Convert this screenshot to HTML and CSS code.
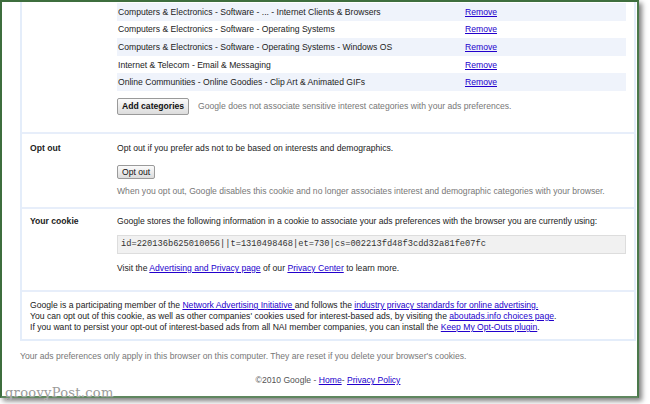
FILE: index.html
```html
<!DOCTYPE html>
<html>
<head>
<meta charset="utf-8">
<link rel="stylesheet" href="styles.css">
</head>
<body>
<div class="frame">
  <div class="box">
    <section class="sec sec-interests">
      <div class="label"></div>
      <div class="content">
        <div class="cats">
          <div class="cat odd"><span class="cat-name">Computers &amp; Electronics - Software - ... - Internet Clients &amp; Browsers</span><a href="#">Remove</a></div>
          <div class="cat"><span class="cat-name">Computers &amp; Electronics - Software - Operating Systems</span><a href="#">Remove</a></div>
          <div class="cat odd"><span class="cat-name">Computers &amp; Electronics - Software - Operating Systems - Windows OS</span><a href="#">Remove</a></div>
          <div class="cat"><span class="cat-name">Internet &amp; Telecom - Email &amp; Messaging</span><a href="#">Remove</a></div>
          <div class="cat odd"><span class="cat-name">Online Communities - Online Goodies - Clip Art &amp; Animated GIFs</span><a href="#">Remove</a></div>
        </div>
        <div class="add-row">
          <button class="btn btn-bold">Add categories</button>
          <span class="note">Google does not associate sensitive interest categories with your ads preferences.</span>
        </div>
      </div>
    </section>
    <section class="sec sec-optout">
      <div class="label">Opt out</div>
      <div class="content">
        <p class="line">Opt out if you prefer ads not to be based on interests and demographics.</p>
        <button class="btn btn-optout">Opt out</button>
        <p class="line note note-optout">When you opt out, Google disables this cookie and no longer associates interest and demographic categories with your browser.</p>
      </div>
    </section>
    <section class="sec sec-cookie">
      <div class="label">Your cookie</div>
      <div class="content">
        <p class="line">Google stores the following information in a cookie to associate your ads preferences with the browser you are currently using:</p>
        <div class="code">id=220136b625010056||t=1310498468|et=730|cs=002213fd48f3cdd32a81fe07fc</div>
        <p class="line visit">Visit the <a href="#">Advertising and Privacy page</a> of our <a href="#">Privacy Center</a> to learn more.</p>
      </div>
    </section>
    <section class="nai">
      <p class="line">Google is a participating member of the <a href="#">Network Advertising Initiative </a> and follows the <a href="#">industry privacy standards for online advertising.</a></p>
      <p class="line">You can opt out of this cookie, as well as other companies' cookies used for interest-based ads, by visiting the <a href="#">aboutads.info choices page</a>.</p>
      <p class="line">If you want to persist your opt-out of interest-based ads from all NAI member companies, you can install the <a href="#">Keep My Opt-Outs plugin</a>.</p>
    </section>
  </div>
  <p class="line note prefs">Your ads preferences only apply in this browser on this computer. They are reset if you delete your browser's cookies.</p>
  <p class="line footer">©2010 Google - <a href="#">Home</a>- <a href="#">Privacy Policy</a></p>
</div>
<div class="watermark">groovyPost.com</div>
</body>
</html>
```
FILE: styles.css
```css
html, body {
  margin: 0;
  padding: 0;
  background: #ffffff;
}
body {
  width: 650px;
  height: 404px;
  overflow: hidden;
  position: relative;
  font-family: "Liberation Sans", Arial, sans-serif;
  font-size: 8.6px;
  color: #222222;
}
a {
  color: #2200cc;
  text-decoration: underline;
}
p {
  margin: 0;
}
.line {
  line-height: 11px;
}
.frame {
  width: 635px;
  height: 394px;
  border: 2px solid #3e6e3e;
  border-bottom-color: #5f875f;
  border-right-color: #4a784a;
  box-shadow: 3px 3px 5px rgba(0, 0, 0, 0.5);
  overflow: hidden;
  background: #ffffff;
}
.box {
  margin-left: 18px;
  width: 612px;
  border-left: 2px solid #e4edfa;
  border-right: 2px solid #e4edfa;
  border-bottom: 2px solid #e4edfa;
}
.sec {
  display: grid;
  grid-template-columns: 95px 1fr;
}
.sec + .sec,
.nai {
  border-top: 2px solid #e7eefa;
}
.label {
  padding-left: 8px;
  font-weight: bold;
  line-height: 11px;
}
.content {
  padding-right: 8px;
}
.sec-interests {
  padding-top: 1px;
  padding-bottom: 17px;
}
.cats {
  display: flex;
  flex-direction: column;
}
.cat {
  display: grid;
  grid-template-columns: 347px 1fr;
  height: 17.6px;
  align-items: center;
  padding-left: 1px;
  background: #ffffff;
}
.cat.odd {
  background: #eff3fb;
}
.add-row {
  display: flex;
  align-items: center;
  gap: 9px;
  margin-top: 7px;
}
.btn {
  font-family: "Liberation Sans", Arial, sans-serif;
  font-size: 8.6px;
  color: #111111;
  background: linear-gradient(#fbfbfb, #dcdcdc);
  border: 1px solid #9a9a9a;
  border-radius: 2px;
  margin: 0;
  cursor: pointer;
  white-space: nowrap;
  line-height: 1;
}
.btn-bold {
  font-weight: bold;
  height: 17px;
  padding: 0 4px;
}
.btn-optout {
  display: block;
  height: 14px;
  padding: 0 4px;
  margin-top: 11px;
}
.note {
  color: #777777;
}
.sec-optout {
  padding-top: 9px;
  padding-bottom: 10px;
}
.note-optout {
  margin-top: 7px;
}
.sec-cookie {
  padding-top: 7px;
  padding-bottom: 16px;
}
.code {
  margin-top: 8px;
  height: 17px;
  line-height: 17px;
  background: #f1f1f1;
  border: 1px solid #dddddd;
  padding-left: 3px;
  font-family: "Liberation Mono", "Courier New", monospace;
  font-size: 8.7px;
  color: #333333;
}
.visit {
  margin-top: 9px;
}
.nai {
  padding: 8px 8px 6px 8px;
}
.prefs {
  margin-top: 10px;
  margin-left: 18px;
}
.footer {
  margin-top: 13px;
  width: 652px;
  text-align: center;
  color: #555555;
}
.watermark {
  position: absolute;
  left: 5px;
  top: 385px;
  font-family: "DejaVu Serif", serif;
  font-size: 13px;
  color: #9a9a9a;
  letter-spacing: 0.3px;
  text-shadow: 0 0 1px #ffffff;
}
```
